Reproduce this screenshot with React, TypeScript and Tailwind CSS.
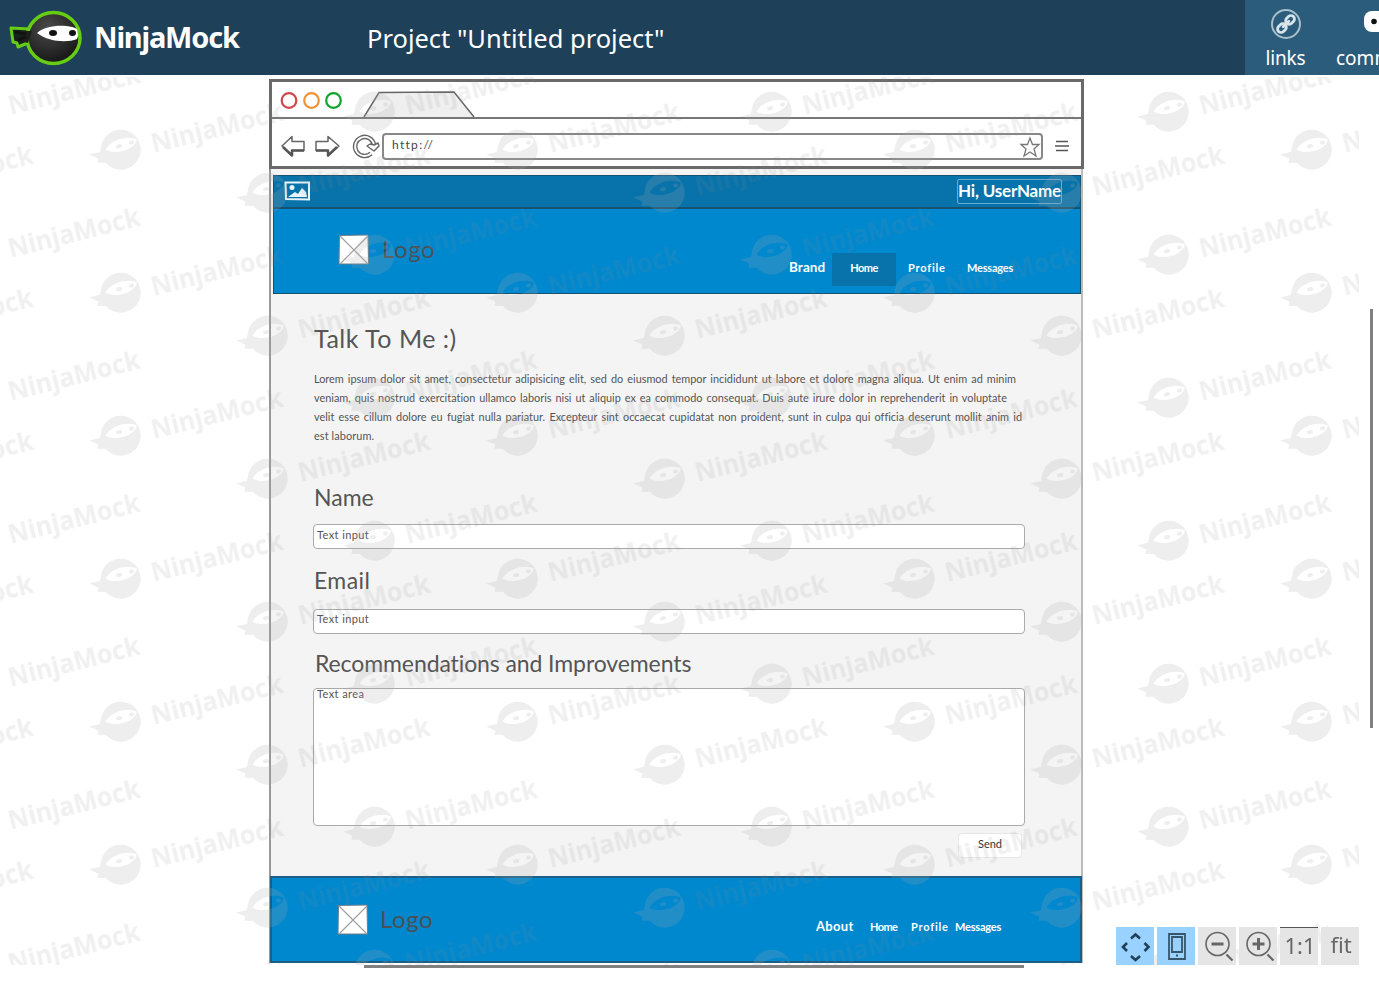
import React from "react";

const hand = "font-['Lato','Noto_Sans',sans-serif] [font-variant-ligatures:none]";

const marks: { x: number; y: number }[] = [];
for (let col = -1; col < 4; col++) {
  for (let row = -1; row < 7; row++) {
    marks.push({ x: 120 + col * 397, y: 150 + row * 143 });
    marks.push({ x: 374 + col * 397, y: 112 + row * 143 });
    marks.push({ x: 267 + col * 397, y: 193 + row * 143 });
  }
}

function Watermark() {
  return (
    <svg className="pointer-events-none absolute left-0 top-[77px]" width="1359" height="888" viewBox="0 77 1359 888">
      <defs>
        <g id="ninja" transform="rotate(-14)">
          <path
            fillRule="evenodd"
            d="M-18 -7 A20 20 0 1 1 -17 9 L-25 7 L-23 3 L-31 -3 L-20 -3 Z M-14 -4 C-6 -12 10 -13 19 -6 C15 3 -5 5 -14 -4 Z"
          />
          <ellipse cx="0" cy="-4" rx="3" ry="2" />
          <ellipse cx="13" cy="-4.500" rx="2.500" ry="2" />
        </g>
        <g id="word" transform="rotate(-14)">
          <text
            x="32"
            y="11"
            fontSize="27.500"
            fontWeight="700"
            fontFamily="'Open Sans', sans-serif"
            textLength="135"
            lengthAdjust="spacingAndGlyphs"
          >
            NinjaMock
          </text>
        </g>
      </defs>
      <g fill="#a8a8a8" opacity="0.2">
        {marks.map((m) => (
          <use key={`${m.x}-${m.y}`} href="#ninja" x={m.x} y={m.y} />
        ))}
      </g>
      <g fill="#8c8c8c" opacity="0.13">
        {marks.map((m) => (
          <use key={`${m.x}-${m.y}`} href="#word" x={m.x} y={m.y} />
        ))}
      </g>
    </svg>
  );
}

function NinjaLogo() {
  return (
    <svg width="76" height="58" viewBox="0 0 76 58" className="shrink-0">
      <defs>
        <radialGradient id="head" cx="0.4" cy="0.3" r="0.7">
          <stop offset="0" stopColor="#4a4a4a" />
          <stop offset="1" stopColor="#171717" />
        </radialGradient>
      </defs>
      <path d="M3 19 L22 20 L22 33 L10 38 L9 34 L5 33 Z" fill="#172318" stroke="#66cc14" strokeWidth="3" strokeLinejoin="round" />
      <ellipse cx="45.500" cy="29" rx="26.500" ry="25.500" fill="url(#head)" stroke="#66cc14" strokeWidth="3.500" />
      <path d="M16 22 L24 22 L20 34 L12 32 Z" fill="#1b1f1b" />
      <path d="M7 23 L18 25 M10 31 L18 28" stroke="#111" strokeWidth="2.500" />
      <path d="M29 24 C38 15 62 15 69 20 Q71 27 69 30 C59 34 41 33 29 24 Z" fill="#fff" />
      <ellipse cx="45" cy="24" rx="4" ry="3" fill="#111" />
      <ellipse cx="64.500" cy="24" rx="3.500" ry="3" fill="#111" />
    </svg>
  );
}

function Header() {
  return (
    <header className="flex h-[75px] w-[1379px] overflow-hidden bg-[#1e4058] text-white">
      <div className="flex w-[367px] items-start pl-[8px] pt-[9px]">
        <NinjaLogo />
        <span className="ml-[10px] mt-[8px] font-['Noto_Sans',sans-serif] text-[29px] font-bold leading-[40px] tracking-[-1.2px]">
          NinjaMock
        </span>
      </div>
      <div className="w-[878px] pt-[20px] font-['Noto_Sans',sans-serif] text-[25.5px] leading-[36px]">
        Project "Untitled project"
      </div>
      <nav className="flex w-[134px] shrink-0 overflow-hidden bg-[#2c5c7b] font-['Noto_Sans',sans-serif] text-[19px]">
        <div className="flex w-[81px] shrink-0 flex-col items-center pt-[9px]">
          <svg width="30" height="30" viewBox="0 0 30 30" fill="none">
            <circle cx="15" cy="15" r="14" stroke="#a9bfcc" strokeWidth="2" />
            <g transform="rotate(-45 15 15)" stroke="#d9e5ec" strokeWidth="2.800" strokeLinecap="round">
              <rect x="4.500" y="11.500" width="9.500" height="7" rx="3.500" />
              <rect x="16" y="11.500" width="9.500" height="7" rx="3.500" />
              <path d="M11 15 H19" />
            </g>
          </svg>
          <span className="mt-[6px] leading-[26px] tracking-[-0.2px]">links</span>
        </div>
        <div className="flex w-[104px] shrink-0 flex-col pl-[10px] pt-[9px]">
          <svg width="40" height="30" viewBox="0 0 40 30" className="ml-[27px]">
            <rect x="1" y="2" width="38" height="21" rx="8" fill="#fff" />
            <circle cx="11" cy="12.500" r="2.800" fill="#111" />
            <circle cx="19" cy="12.500" r="2.800" fill="#111" />
          </svg>
          <span className="mt-[6px] leading-[26px]">comments</span>
        </div>
      </nav>
    </header>
  );
}

function BrowserChrome() {
  return (
    <div className="h-[90px] w-[815px] border-[3px] border-[#6a6a6a] bg-white">
      <div className="flex h-[37px] items-end border-b-2 border-[#777]">
        <svg width="66" height="35" viewBox="0 0 66 35" fill="none" strokeWidth="2.200" className="ml-[8px]">
          <circle cx="9" cy="18.500" r="7.300" stroke="#d0484e" />
          <circle cx="31.500" cy="18.500" r="7.300" stroke="#ee9434" />
          <circle cx="53.500" cy="18.500" r="7.300" stroke="#12a32b" />
        </svg>
        <svg width="114" height="27" viewBox="0 0 114 27" fill="#efefef" stroke="#666" strokeWidth="1.500" className="ml-[16px]">
          <path d="M2 27 L17 2.500 L92 2 L112 27" />
        </svg>
      </div>
      <div className="flex h-[47px] items-center pt-[8px]">
        <svg width="102" height="28" viewBox="0 0 102 28" fill="none" stroke="#666" strokeWidth="1.500" strokeLinejoin="round" className="ml-[8px]">
          <path d="M2 13 L12 3.500 V8.500 H24 V17.500 H12 V22.500 Z" />
          <path d="M24 17.500 H12 V22.500 L3 14" stroke="#555" strokeWidth="2.500" />
          <path d="M59 13 L48 3.500 V8.500 H36 V17.500 H48 V22.500 Z" />
          <path d="M36 17.500 H48 V22.500 L57 14" stroke="#555" strokeWidth="2.500" />
          <path d="M94 12 A9.500 9.500 0 1 0 91 20.500" strokeWidth="4.600" />
          <path d="M94 12 A9.500 9.500 0 1 0 91 20.500" stroke="#fff" strokeWidth="1.800" />
          <path d="M87 13 L90 11 L94 12 L98 10 L99 13 L94 18 Z" fill="#fff" />
        </svg>
        <div className="flex h-[27px] w-[661px] items-center justify-between rounded-[4px] border-2 border-[#888] pl-[8px]">
          <span className={`${hand} mb-[3px] text-[12px] leading-[16px] tracking-[1.3px] text-[#444]`}>http://</span>
          <svg width="22" height="22" viewBox="0 0 22 22" fill="none" stroke="#777" strokeWidth="1.300">
            <path d="M11 2 L13.500 8.500 H20 L15 13 L17 20 L11 16 L5 20 L7 13 L2 8.500 H8.500 Z" />
          </svg>
        </div>
        <svg width="14" height="12" viewBox="0 0 14 12" stroke="#555" strokeWidth="1.600" className="mb-[1px] ml-[12px]">
          <path d="M1 1.500 H13 M0 6 H14 M1 10.500 H13" />
        </svg>
      </div>
    </div>
  );
}

function LogoBox() {
  return (
    <svg width="32" height="32" viewBox="0 0 32 32" className="shrink-0">
      <path d="M1.500 1.500 L30 1 L30.500 30 L1 30 Z" fill="#fff" stroke="#6b7f8c" />
      <path d="M2 2 L30 30 M30 2 L2 30" stroke="#a0a0a0" strokeWidth="1.200" />
    </svg>
  );
}

function PictureIcon() {
  return (
    <svg width="27" height="20" viewBox="0 0 27 20">
      <path d="M1.500 1.500 H25 V18.500 L2 18 Z" fill="none" stroke="#eaf5fb" strokeWidth="2" />
      <circle cx="8" cy="6.500" r="2.500" fill="#eaf5fb" />
      <path d="M4 16 L11 11 L14 13 L18 7 L22 11 L23 16 Z" fill="#eaf5fb" />
    </svg>
  );
}

const paragraph = [
  { w: "w-[702px]", t: "Lorem ipsum dolor sit amet, consectetur adipisicing elit, sed do eiusmod tempor incididunt ut labore et dolore magna aliqua. Ut enim ad minim" },
  { w: "w-[693px]", t: "veniam, quis nostrud exercitation ullamco laboris nisi ut aliquip ex ea commodo consequat. Duis aute irure dolor in reprehenderit in voluptate" },
  { w: "w-[708px]", t: "velit esse cillum dolore eu fugiat nulla pariatur. Excepteur sint occaecat cupidatat non proident, sunt in culpa qui officia deserunt mollit anim id" },
];

function PageMock() {
  return (
    <div className={`${hand} h-[794px] w-[814px] border-l-2 border-r-2 border-l-[#999] border-r-[#bbb] bg-[#f4f4f4]`}>
      <div className="ml-[2px] w-[808px] pt-[6px]">
        <div className="flex h-[32px] items-start border border-b-0 border-[#17516f] bg-[#0873ab] pl-[10px] pt-[5px]">
          <PictureIcon />
          <div className="ml-auto mr-[18px] mt-[-2px] flex h-[25px] w-[105px] justify-center whitespace-nowrap rounded-[2px] border border-[#67abd0] text-[17px] font-bold leading-[22px] tracking-[-0.2px] text-white">
            Hi, UserName
          </div>
        </div>
        <div className="flex h-[87px] border border-t-2 border-[#17516f] bg-[#0088cf] text-white">
          <div className="ml-[64px] mt-[25px] flex w-[445px] items-start">
            <LogoBox />
            <span className="ml-[12px] mt-px text-[24px] leading-[28px] tracking-[0.6px] text-[#4a5055]">Logo</span>
          </div>
          <div className="mt-[44px] flex h-[33px] whitespace-nowrap text-[11px] font-bold leading-[29px]">
            <span className="ml-[6px] w-[43px] text-[13.5px] tracking-[0.1px]">Brand</span>
            <span className="flex h-full w-[64px] justify-center bg-[#0873ab] tracking-[-0.6px]">Home</span>
            <span className="ml-[12px] w-[59px] tracking-[0.8px]">Profile</span>
            <span className="tracking-[-0.2px]">Messages</span>
          </div>
        </div>
      </div>
      <div className="flex h-[582px] flex-col pl-[43px] text-[#555]">
        <h1 className="mt-[28px] h-[32px] whitespace-nowrap text-[25px] leading-[32px] tracking-[0.5px]">Talk To Me :)</h1>
        <div className="mt-[15px] h-[76px] text-[10.9px] leading-[19px] text-[#555]">
          {paragraph.map((l) => (
            <p key={l.t} className={`${l.w} whitespace-nowrap [text-align-last:justify]`}>
              {l.t}
            </p>
          ))}
          <p className="tracking-[0.1px]">est laborum.</p>
        </div>
        <h2 className="mt-[37px] h-[30px] text-[23px] leading-[30px]">Name</h2>
        <div className="ml-[-1px] mt-[12px] h-[25px] w-[712px] rounded-[4px] border-[1.5px] border-[#aaa] bg-white pl-[3px] text-[11px] leading-[20px] tracking-[0.4px]">
          Text input
        </div>
        <h2 className="mt-[16px] h-[30px] text-[23px] leading-[30px] tracking-[0.4px]">Email</h2>
        <div className="ml-[-1px] mt-[14px] h-[25px] w-[712px] rounded-[4px] border-[1.5px] border-[#aaa] bg-white pl-[3px] text-[11px] leading-[18px] tracking-[0.4px]">
          Text input
        </div>
        <h2 className="ml-[1px] mt-[14px] h-[30px] whitespace-nowrap text-[23px] leading-[30px] tracking-[-0.1px]">
          Recommendations and Improvements
        </h2>
        <div className="ml-[-1px] mt-[10px] h-[138px] w-[712px] rounded-[4px] border-[1.5px] border-[#aaa] bg-white pl-[3px] text-[11px] leading-[10px] tracking-[0.4px]">
          Text area
        </div>
        <div className="ml-[644px] mt-[7px] flex h-[25px] w-[64px] items-center justify-center rounded-[4px] border border-[#e8e8e8] bg-white pb-[3px] text-[11px] text-[#333]">
          Send
        </div>
      </div>
      <div className="ml-[-1px] flex h-[87px] w-[812px] border-2 border-[#1b5f86] bg-[#0088cf] text-white">
        <div className="ml-[65px] mt-[26px] flex w-[479px] items-start">
          <LogoBox />
          <span className="ml-[11px] mt-px text-[24px] leading-[28px] tracking-[0.6px] text-[#4a5055]">Logo</span>
        </div>
        <div className="mt-[36px] flex h-[26px] items-center whitespace-nowrap text-[11px] font-bold">
          <span className="w-[54px] text-[13px] tracking-[0.3px]">About</span>
          <span className="w-[41px] tracking-[-0.6px]">Home</span>
          <span className="w-[44px] tracking-[0.8px]">Profile</span>
          <span className="tracking-[-0.2px]">Messages</span>
        </div>
      </div>
    </div>
  );
}

function Magnifier({ plus }: { plus?: boolean }) {
  return (
    <svg width="38" height="38" viewBox="0 0 38 38" fill="none" stroke="#666">
      <circle cx="19.500" cy="17" r="11.500" strokeWidth="1.600" />
      <path d="M28.500 27.500 L34.500 33.500" strokeWidth="2.200" />
      <path d={plus ? "M13.500 17 H25.500 M19.500 11 V23" : "M13.500 17 H25.500"} strokeWidth="3" />
    </svg>
  );
}

function ZoomBar() {
  const text = "h-[38px] w-[38px] bg-[#e5e5e5] pl-[2px] text-center font-['Noto_Sans',sans-serif] text-[22px] leading-[35px] text-[#666]";
  return (
    <div className="absolute left-[1116px] top-[927px] flex gap-[3px]">
      <div className="h-[38px] w-[38px] bg-[#99d1ff]">
        <svg width="38" height="38" viewBox="0 0 38 38" fill="none" stroke="#1e4058" strokeWidth="2.600">
          <path d="M15 11.500 L19.500 7.500 L24 11.500 M15 29 L19.500 33 L24 29 M11 16 L7 20 L11 24 M28.500 16 L32.500 20 L28.500 24" />
        </svg>
      </div>
      <div className="h-[38px] w-[38px] bg-[#99d1ff]">
        <svg width="38" height="38" viewBox="0 0 38 38" fill="none" stroke="#35566c" strokeWidth="1.800">
          <path d="M12 7 H28 V32 H12 Z" />
          <path d="M15 10 H25 V25 H15 Z" />
          <path d="M19 28.500 H21" strokeWidth="2" />
        </svg>
      </div>
      <div className="h-[38px] w-[38px] bg-[#e5e5e5]">
        <Magnifier />
      </div>
      <div className="h-[38px] w-[38px] bg-[#e5e5e5]">
        <Magnifier plus />
      </div>
      <div className={`${text} border-t border-[#555]`}>1:1</div>
      <div className={text}>fit</div>
    </div>
  );
}

export default function App() {
  return (
    <div className="relative h-[989px] w-[1379px] overflow-hidden bg-white">
      <Header />
      <main className="pl-[269px] pt-[4px]">
        <BrowserChrome />
        <PageMock />
      </main>
      <Watermark />
      <div className="absolute left-[364px] top-[965px] h-[3px] w-[660px] bg-[#808080]" />
      <div className="absolute left-[1370px] top-[309px] h-[419px] w-[3px] bg-[#808080]" />
      <ZoomBar />
    </div>
  );
}
